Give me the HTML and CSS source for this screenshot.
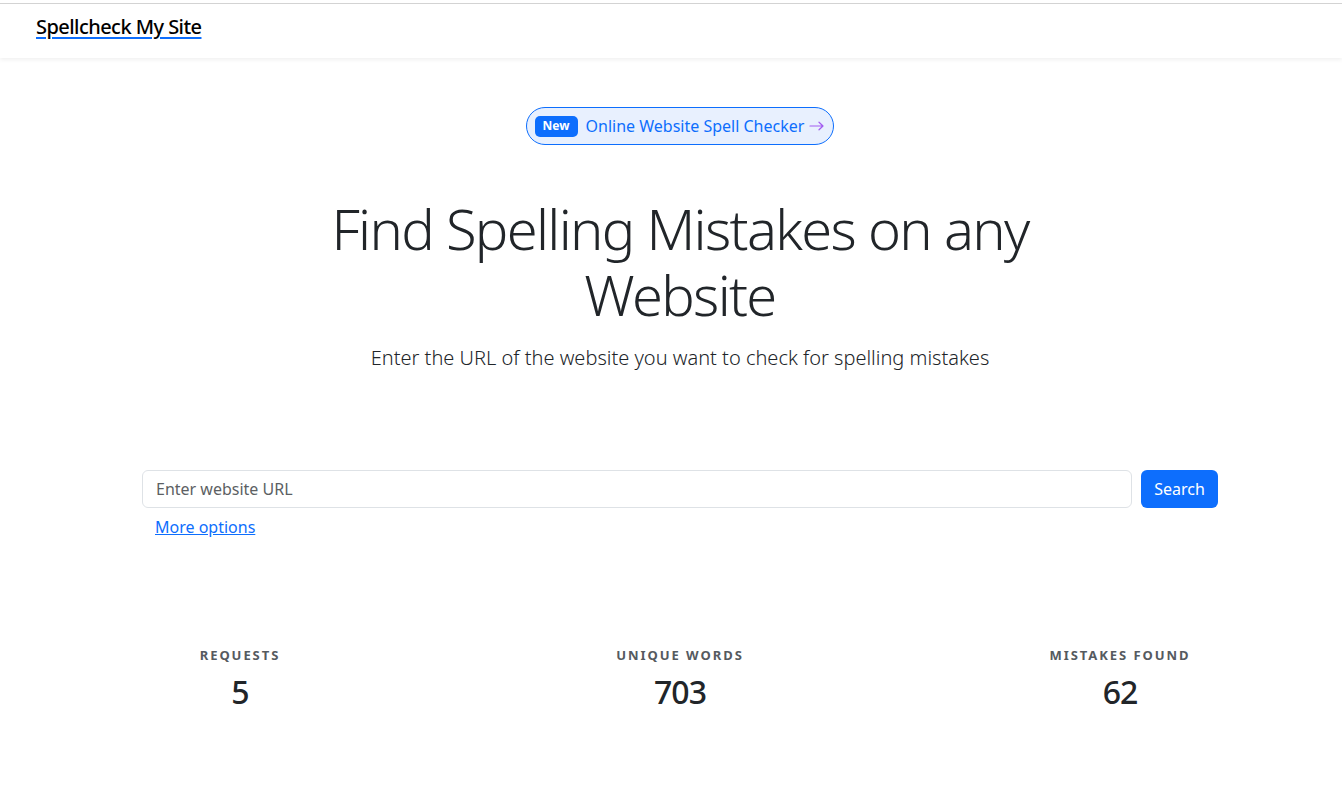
FILE: index.html
```html
<!DOCTYPE html>
<html lang="en">
<head>
<meta charset="utf-8">
<title>Spellcheck My Site</title>
<link rel="stylesheet" href="styles.css">
</head>
<body>
<div class="topline"></div>
<nav class="navbar">
  <a class="brand" href="#">Spellcheck My Site</a>
</nav>
<main class="main">
  <section class="hero">
    <a class="pill" href="#"><span class="pill-badge">New</span><span class="pill-text">Online Website Spell Checker</span><svg class="pill-arrow" width="15" height="10" viewBox="0 0 15 10" fill="none" stroke="#a25cf0" stroke-width="1.2" stroke-linecap="round" stroke-linejoin="round"><path d="M1 5H14M10 1.2L14 5L10 8.8"/></svg></a>
    <h1 class="title">Find Spelling Mistakes on any<br>Website</h1>
    <p class="lead">Enter the URL of the website you want to check for spelling mistakes</p>
  </section>
  <section class="search">
    <form class="search-row">
      <input class="search-input" type="text" placeholder="Enter website URL">
      <button class="search-btn" type="button">Search</button>
    </form>
    <a class="more" href="#">More options</a>
  </section>
  <section class="stats">
    <div class="stat"><div class="stat-label">Requests</div><div class="stat-value">5</div></div>
    <div class="stat"><div class="stat-label">Unique Words</div><div class="stat-value">703</div></div>
    <div class="stat"><div class="stat-label">Mistakes Found</div><div class="stat-value">62</div></div>
  </section>
</main>
</body>
</html>
```
FILE: styles.css
```css
* { box-sizing: border-box; }
html, body { margin: 0; padding: 0; }
body {
  font-family: "Noto Sans", "Liberation Sans", sans-serif;
  font-size: 16px;
  line-height: 1.5;
  color: #212529;
  background: #fff;
  overflow-x: hidden;
}
.topline {
  height: 4px;
  border-bottom: 1px solid #d4d4d4;
}
.navbar {
  height: 54px;
  display: flex;
  align-items: center;
  padding: 0 36px 8px;
  box-shadow: 0 2px 4px rgba(0,0,0,0.06);
  position: relative;
}
.brand {
  font-size: 20px;
  font-weight: 500;
  letter-spacing: -0.55px;
  color: #000;
  text-decoration: underline;
  text-decoration-color: #0d6efd;
  text-underline-offset: 3px;
}
.main {
  padding-left: 18px;
}
.hero {
  display: flex;
  flex-direction: column;
  align-items: center;
  padding-top: 49px;
}
.pill {
  display: inline-flex;
  align-items: center;
  height: 38px;
  padding: 0 8px;
  border: 1px solid #0d6efd;
  border-radius: 19px;
  background: #e8f0fe;
  text-decoration: none;
  color: #0d6efd;
}
.pill-badge {
  background: #0d6efd;
  color: #fff;
  font-size: 12px;
  font-weight: 700;
  line-height: 1;
  padding: 4px 8px 5px;
  border-radius: 5px;
  margin-right: 8px;
}
.pill-text { font-size: 16px; }
.pill-arrow { margin-left: 5px; margin-right: 1px; }
.title {
  margin: 50px 0 0;
  font-size: 56px;
  font-weight: 300;
  letter-spacing: -0.03em;
  line-height: 66px;
  text-align: center;
}
.lead {
  margin: 16px 0 0;
  font-size: 20px;
  font-weight: 300;
  line-height: 30px;
  text-align: center;
}
.search {
  width: 1076px;
  margin: 97px auto 0;
}
.search-row {
  display: flex;
  gap: 9px;
  margin: 0;
}
.search-input {
  flex: 1;
  height: 38px;
  border: 1px solid #dee2e6;
  border-radius: 6px;
  padding: 0 13px;
  font-family: inherit;
  font-size: 16px;
  color: #212529;
}
.search-input::placeholder { color: #5c5f63; }
.search-btn {
  width: 77px;
  height: 38px;
  border: none;
  border-radius: 6px;
  background: #0d6efd;
  color: #fff;
  font-family: inherit;
  font-size: 16px;
}
.more {
  display: inline-block;
  margin: 7px 0 0 13px;
  color: #0d6efd;
  font-size: 16px;
  line-height: 24px;
}
.stats {
  width: 1320px;
  margin: 106px auto 0;
  display: grid;
  grid-template-columns: repeat(3, 1fr);
}
.stat { text-align: center; }
.stat-label {
  font-size: 13px;
  font-weight: 700;
  letter-spacing: 0.15em;
  text-transform: uppercase;
  color: #555a60;
  line-height: 20px;
}
.stat-value {
  font-size: 32px;
  font-weight: 500;
  letter-spacing: -1px;
  line-height: 48px;
  margin-top: 3px;
  color: #212529;
}
```
